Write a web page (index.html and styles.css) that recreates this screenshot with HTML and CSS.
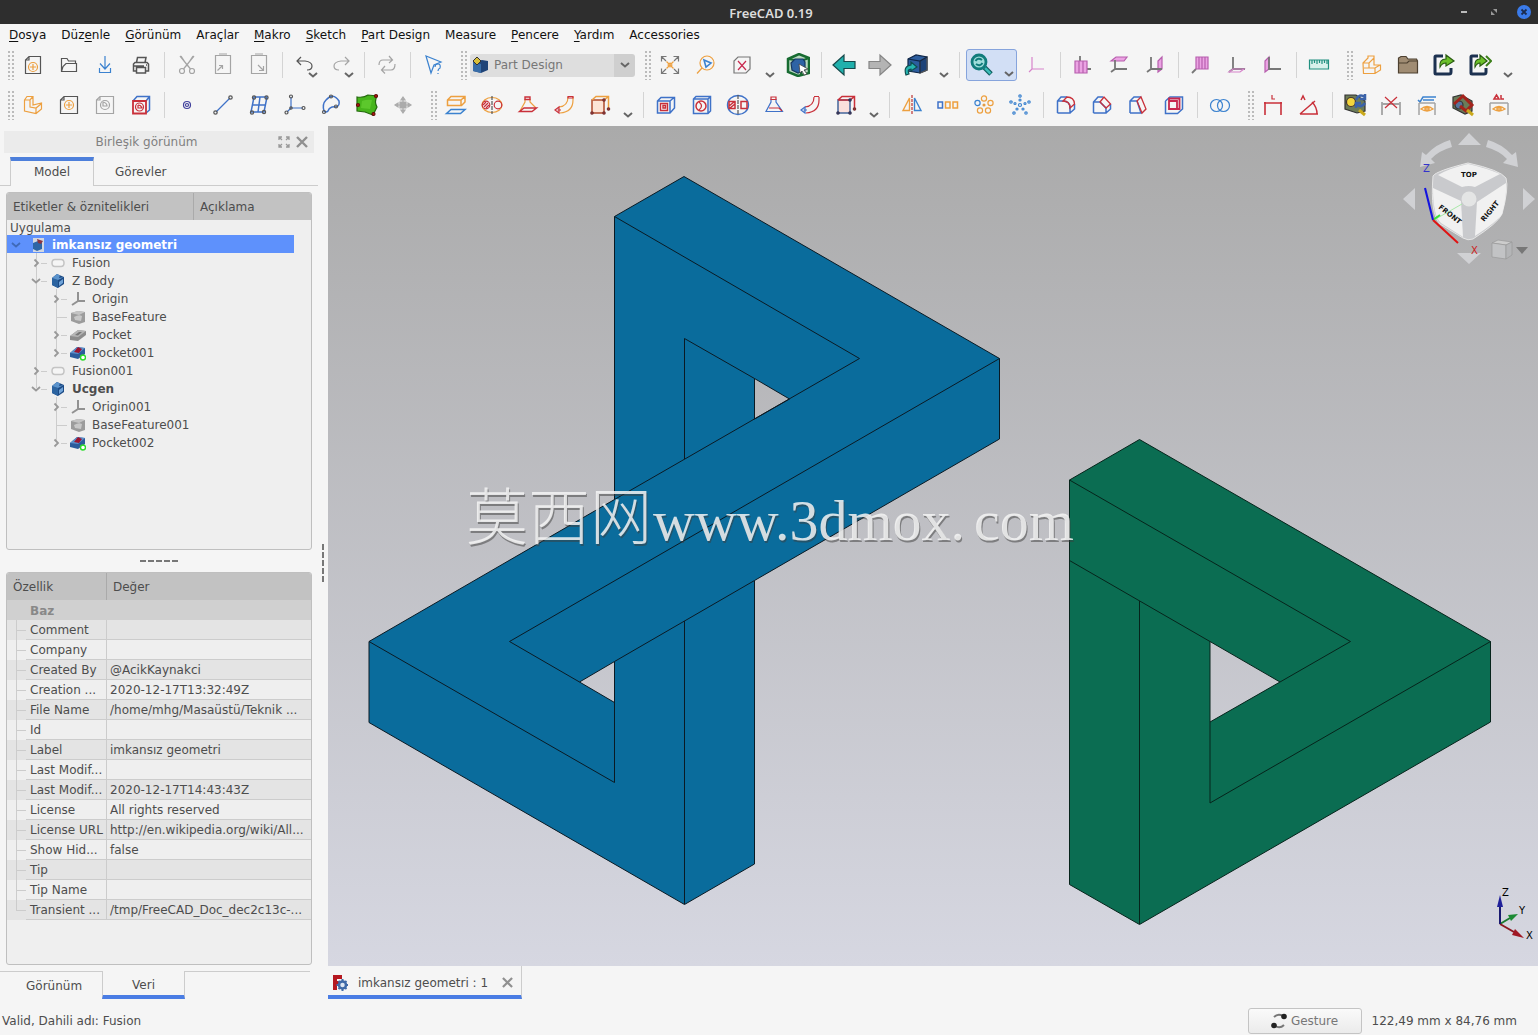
FILE: index.html
```html
<!DOCTYPE html>
<html lang="tr">
<head>
  <meta charset="UTF-8">
  <meta name="viewport" content="width=device-width, initial-scale=1.0">
  <title>FreeCAD 0.19</title>
  <link rel="stylesheet" href="styles.css">
</head>
<body>

  <!-- Icons used more than once -->
  <svg class="defs" aria-hidden="true">
    <symbol id="chev" viewBox="0 0 10 6"><path d="M1 1L5 4.500L9 1" fill="none" stroke="currentColor" stroke-width="2"/></symbol>
    <symbol id="expand" viewBox="0 0 10 10"><path d="M3.500 1.500L7 5L3.500 8.500" fill="none" stroke="currentColor" stroke-width="1.800"/></symbol>
    <symbol id="collapse" viewBox="0 0 10 10"><path d="M1 3L5 6.500L9 3" fill="none" stroke="currentColor" stroke-width="1.800"/></symbol>
    <symbol id="close" viewBox="0 0 12 12"><path d="M1 1L11 11M11 1L1 11" fill="none" stroke="#909090" stroke-width="2.400"/></symbol>
    <symbol id="fusion" viewBox="0 0 16 16"><path d="M5 4.500H11Q14 4.500 14 8T11 11.500H5Q2 11.500 2 8T5 4.500Z" fill="#f5f5f5" stroke="#c4c4c4" stroke-width="1.500"/></symbol>
    <symbol id="bodyicon" viewBox="0 0 16 16"><path d="M2 5L7 1L14 4V11L8 15L2 12Z" fill="#1c4a84"/><path d="M2 5L8 7V15L2 12Z" fill="#2b63a0"/><path d="M2 5L7 1L10 2.500L9 5L14 4L8 7Z" fill="#5b93cc"/><path d="M9 9L13 6V10L9 13Z" fill="#6fa3d8"/></symbol>
    <symbol id="origin" viewBox="0 0 16 16"><path d="M8 1V10L2 14M8 10H15" fill="none" stroke="#929292" stroke-width="2"/></symbol>
    <symbol id="base" viewBox="0 0 16 16"><path d="M1 4L8 2L15 3V13L9 15L1 12Z" fill="#9c9c9c"/><path d="M1 4L8 2L15 3L9 6Z" fill="#c4c4c4"/><path d="M4 8Q9 5 12 7L11 12L5 11Z" fill="#c8c8c8"/></symbol>
    <symbol id="pocketgrey" viewBox="0 0 16 16"><path d="M0 9L8 3L16 4V8L8 14L0 13Z" fill="#8c8c8c"/><path d="M0 9L8 3L16 4L8 10Z" fill="#b5b5b5"/><path d="M5 8L9 5H12L8 8.500Z" fill="#777"/></symbol>
    <symbol id="pocket" viewBox="0 0 16 16"><path d="M0 8L7 2L15 3V9L8 14L0 12Z" fill="#2b5b9c"/><path d="M0 8L7 2L15 3L8 9Z" fill="#5c8fcb"/><path d="M4 7L8 2L12 4L9 8Z" fill="#9c1530"/><circle cx="13" cy="12.500" r="2.500" fill="#fff" stroke="#2bdc2b" stroke-width="1.400"/></symbol>
  </svg>

  <header class="titlebar">
    <h1>FreeCAD 0.19</h1>
    <div class="winbuttons">
      <button aria-label="Küçült"><svg viewBox="0 0 16 16"><path d="M5 8H11" stroke="#bbb" stroke-width="2"/></svg></button>
      <button aria-label="Geri yükle"><svg viewBox="0 0 16 16"><path d="M7 5H11V9ZM5 7V11H9Z" fill="#999"/></svg></button>
      <button aria-label="Kapat"><svg viewBox="0 0 16 16"><circle cx="8" cy="8" r="7" fill="#3a7bea"/><path d="M5.500 5.500L10.500 10.500M10.500 5.500L5.500 10.500" stroke="#1b2c50" stroke-width="1.800"/></svg></button>
    </div>
  </header>

  <nav class="menubar">
    <a href="#"><u>D</u>osya</a>
    <a href="#">Düz<u>e</u>nle</a>
    <a href="#"><u>G</u>örünüm</a>
    <a href="#">Araçlar</a>
    <a href="#"><u>M</u>akro</a>
    <a href="#"><u>S</u>ketch</a>
    <a href="#"><u>P</u>art Design</a>
    <a href="#">Measure</a>
    <a href="#"><u>P</u>encere</a>
    <a href="#"><u>Y</u>ardım</a>
    <a href="#">Accessories</a>
  </nav>

  <div class="toolrow">
    <div class="toolbar">
      <span class="handle"></span>
      <button class="tool" aria-label="Yeni"><svg viewBox="0 0 24 24"><path d="M8 3.500H19.500V20.500H4.500V7ZM8 3.500V7H4.500"/><g class="orange"><circle cx="12" cy="14" r="4.500"/><path d="M12 11V17M9 14H15"/></g></svg></button>
      <button class="tool" aria-label="Aç"><svg viewBox="0 0 24 24"><path d="M4.500 19V5.500H10L11.500 8H18.500V10.500M4.500 18.500H19.500V10.500H9L6 13.500L4.500 18.500"/></svg></button>
      <button class="tool" aria-label="Kaydet"><svg viewBox="0 0 24 24"><path class="azure" d="M6.500 15V19.500H17.500V15M12 3V16M7 10.500L12 16L17 10.500"/></svg></button>
      <button class="tool" aria-label="Yazdır"><svg viewBox="0 0 24 24"><path d="M7.500 9.500L8.500 4.500H17L16 9.500M4.500 18V11L6 9.500H18L19.500 11V18H16.500V14.500H7.500V18ZM7.500 18V20H16.500V18M4.500 13H15M17 12H18" stroke-width="1.500"/></svg></button>
      <span class="sep"></span>
      <button class="tool" aria-label="Kes"><svg class="grey" viewBox="0 0 24 24"><path d="M5 3L15.500 16M19 3L8.500 16M6 3L12.500 13M18 3L11.500 13"/><circle cx="7" cy="18" r="2.500"/><circle cx="17" cy="18" r="2.500"/></svg></button>
      <button class="tool" aria-label="Kopyala"><svg class="grey" viewBox="0 0 24 24"><path d="M4.500 2.500H19.500V20.500H4.500ZM8 1H16M6.500 17.500L11.500 12.500M8 12.500H11.500V16"/></svg></button>
      <button class="tool" aria-label="Yapıştır"><svg class="grey" viewBox="0 0 24 24"><path d="M4.500 2.500H19.500V20.500H4.500ZM8 1H16M11 12L16.500 17.500M16.500 13V17.500H12"/></svg></button>
      <span class="sep"></span>
      <button class="tool" aria-label="Geri al"><svg viewBox="0 0 24 24"><path d="M8 4L4 8L8 12M4 8H12Q19 9 19 13Q19 17 14 17"/></svg><svg class="corner"><use href="#chev"/></svg></button>
      <button class="tool" aria-label="Yinele"><svg class="grey" viewBox="0 0 24 24"><path d="M16 4L20 8L16 12M20 8H12Q5 9 5 13Q5 17 10 17"/></svg><svg class="corner"><use href="#chev"/></svg></button>
      <span class="sep"></span>
      <button class="tool" aria-label="Yenile"><svg class="grey" viewBox="0 0 24 24"><path d="M4 12Q4 7 8 7H17M14 3L17.500 7L14 10M20 11Q20 17 16 17H7M10 13L6.500 17L10 20.500"/></svg></button>
      <span class="sep"></span>
      <button class="tool" aria-label="Bu nedir?"><svg class="azure" viewBox="0 0 24 24"><path d="M5 3L10 20L13 12L20 9Z"/><path d="M14 14Q14 11 17 11T19 15Q17 16 17 18M17 20V21"/></svg></button>
    </div>
    <div class="toolbar">
      <span class="handle"></span>
      <div class="combo">
        <svg class="comboicon" viewBox="0 0 16 16"><path d="M1 5L10 3L16 4V13L9 16L1 14Z" fill="#1f4478"/><path d="M1 5L9 7V16L1 14Z" fill="#386da8"/><path d="M1 4L5 0L9 4L5 8Z" fill="#d9c03a" stroke="#333" stroke-width="1"/></svg>
        <select aria-label="Tezgah"><option>Part Design</option></select>
        <svg class="comboarrow"><use href="#chev"/></svg>
      </div>
    </div>
    <div class="toolbar">
      <span class="handle"></span>
      <button class="tool" aria-label="Tümünü sığdır"><svg viewBox="0 0 24 24"><path class="mid" d="M3.500 8.500V3.500H8.500M3.500 3.500L8 8M15.500 3.500H20.500V8.500M20.500 3.500L16 8M3.500 15.500V20.500H8.500M3.500 20.500L8 16M20.500 15.500V20.500H15.500M20.500 20.500L16 16"/><path class="orange" d="M8.500 8.500L15.500 15.500M15.500 8.500L8.500 15.500M12 10L14 12L12 14L10 12Z"/></svg></button>
      <button class="tool" aria-label="Seçimi sığdır"><svg viewBox="0 0 24 24"><g class="orange"><circle cx="13" cy="10" r="7"/><path d="M8 15L3 20.500"/></g><path class="azure" d="M10 7L17 10L12 14Z" stroke-width="1.600"/></svg></button>
      <button class="tool" aria-label="Çizim stili"><svg viewBox="0 0 24 24"><path class="mid" d="M8 4H20V16L16 20H4V8Z"/><path class="crimson" d="M8 8L16 17M16 8L8 17"/></svg></button>
      <button class="more" aria-label="Çizim stili seçenekleri"><svg><use href="#chev"/></svg></button>
      <button class="tool" aria-label="Sınırlayıcı kutu"><svg viewBox="0 0 24 24"><path d="M2 6L13 1L23 5V20L12 23L2 19Z" fill="#b9d8c0" stroke="#176b31" stroke-width="2.500"/><path d="M2 6L15 8L23 5M15 8V22" stroke="#176b31" stroke-width="2"/><path d="M5 10L9 6H17L19 9V17L12 20L6 17Z" fill="#2e63a5" stroke="#173861"/><path d="M13 11L22 16L18 17L21 21L18 22L16 18L14 20Z" fill="#fff" stroke="#444" stroke-width=".8"/></svg></button>
      <span class="sep"></span>
      <button class="tool" aria-label="Geri"><svg viewBox="0 0 24 24"><path d="M1 12L12 2V8.500H23V15.500H12V22Z" fill="#20b0ac" stroke="#17484a"/></svg></button>
      <button class="tool" aria-label="İleri"><svg viewBox="0 0 24 24"><path d="M23 12L12 2V8.500H1V15.500H12V22Z" fill="#b4b4b4" stroke="#858585"/></svg></button>
      <button class="tool" aria-label="Bağlantıya git"><svg viewBox="0 0 24 24"><path d="M4 6L12 2L23 4V17L16 20L4 18Z" fill="#2c5d9e" stroke="#0e2547"/><path d="M16 8L23 4V17L16 20Z" fill="#1c4278"/><path d="M4 6L16 8L23 4M16 8V20" stroke="#0e2547"/><path d="M2 22Q-1 13 7 12V9L13 14L7 18V16Q3 16 5 21Z" fill="#25b5b0" stroke="#0f4e50"/></svg></button>
      <button class="more" aria-label="Bağlantı seçenekleri"><svg><use href="#chev"/></svg></button>
      <span class="sep"></span>
      <button class="tool active" aria-label="Görünümü eşitle"><svg viewBox="0 0 24 24"><path d="M14.500 14.500L21 21" stroke="#0d5e5e" stroke-width="5"/><path d="M15 15L20.500 20.500" stroke="#3bbcb8" stroke-width="2.500"/><circle cx="9" cy="9" r="7" fill="#9fdedb" stroke="#117c7c" stroke-width="2.800"/><path d="M5.500 8Q8 4 12 7M12.500 10Q10 14 6 11" stroke="#117c7c" stroke-width="2"/></svg><svg class="corner"><use href="#chev"/></svg></button>
      <button class="tool" aria-label="Eşölçümlü"><svg class="pink" viewBox="0 0 24 24"><path d="M7 4V16H19M7 16L4 19"/></svg></button>
      <span class="sep"></span>
      <button class="tool" aria-label="Ön"><svg viewBox="0 0 24 24"><path class="mid" d="M9 3V16H20" stroke-width="1.800"/><path class="pinkfill" d="M4 8H16V20H4ZM8 8V20M12 8V20"/></svg></button>
      <button class="tool" aria-label="Üst"><svg viewBox="0 0 24 24"><path class="pinkfill" d="M4 8L9 4H20L17 8Z"/><path class="mid" d="M8 7V16H20M8 16L4 19" stroke-width="1.800"/></svg></button>
      <button class="tool" aria-label="Sağ"><svg viewBox="0 0 24 24"><path class="pinkfill" d="M15 8L19 4V16L15 19Z"/><path class="mid" d="M8 4V16H19M8 16L4 19" stroke-width="1.800"/></svg></button>
      <span class="sep"></span>
      <button class="tool" aria-label="Arka"><svg viewBox="0 0 24 24"><path class="mid" d="M7 16L3 20" stroke-width="1.800"/><path class="pinkfill" d="M7 4H19V16H7ZM10 4V16M13 4V16M16 4V16"/></svg></button>
      <button class="tool" aria-label="Alt"><svg viewBox="0 0 24 24"><path class="mid" d="M8 4V16H20M8 16L4 19" stroke-width="1.800"/><path class="pink" d="M4 19L8 16H19L15 19Z"/></svg></button>
      <button class="tool" aria-label="Sol"><svg viewBox="0 0 24 24"><path class="pinkfill" d="M4 8L8 4V16L4 19Z"/><path class="mid" d="M8 4V16H20" stroke-width="1.800"/></svg></button>
      <span class="sep"></span>
      <button class="tool" aria-label="Mesafe ölç"><svg viewBox="0 0 24 24"><path d="M2.500 7H21.500V16H2.500ZM5 7V11M7.500 7V10M10 7V11M12.500 7V10M15 7V11M17.500 7V10M20 7V11" fill="#d8f1ec" stroke="#219080"/></svg></button>
    </div>
    <div class="toolbar">
      <span class="handle"></span>
      <button class="tool" aria-label="Parça oluştur"><svg class="orange" viewBox="0 0 24 24"><path d="M3 10L8 5V3H14V12H20.500V17L15 20.500H3.500ZM3 10H9L14 5M9 10V15H15L20 12M15 15V20M4 15H9"/></svg></button>
      <button class="tool" aria-label="Grup oluştur"><svg viewBox="0 0 24 24"><path d="M2.500 20V5L5 3.500H10L12 6H20.500L21.500 8V20Z" fill="#a08c73" stroke="#4d4030"/><path d="M3 10H11L13 8H21" stroke="#4d4030"/></svg></button>
      <button class="tool" aria-label="Bağlantı oluştur"><svg viewBox="0 0 24 24"><path d="M11 3H4Q3 3 3 4V20Q3 21 4 21H17Q19 21 19 19V15" stroke="#1c3150" stroke-width="3"/><path d="M8 14Q7 6 14 6V2L22 8L14 13V10Q10 10 8 14Z" fill="#6cc02b" stroke="#2a5c12"/></svg></button>
      <button class="tool" aria-label="Bağlantı grubu"><svg viewBox="0 0 24 24"><path d="M10 3H4Q3 3 3 4V20Q3 21 4 21H16Q18 21 18 19V15" stroke="#1c3150" stroke-width="3"/><path d="M7 14Q6 6 12 6V2L19 8L12 13V10Q9 10 7 14Z" fill="#6cc02b" stroke="#2a5c12"/><path d="M18 3L23 8L18 13" stroke="#3c7f1a" stroke-width="2"/></svg></button>
      <button class="more" aria-label="Bağlantı eylemleri"><svg><use href="#chev"/></svg></button>
    </div>
  </div>

  <div class="toolrow">
    <div class="toolbar">
      <span class="handle"></span>
      <button class="tool" aria-label="Gövde oluştur"><svg class="orange" viewBox="0 0 24 24"><path d="M3.500 7L6 3.500H12V12L20.500 10V16L15 20.500L3.500 18ZM3.500 7H9L12 3.500M9 7V14L15 15L20 11M15 15V20"/></svg></button>
      <button class="tool" aria-label="Eskiz oluştur"><svg viewBox="0 0 24 24"><path d="M7 3.500H20.500V20.500H3.500V7ZM7 3.500V7H3.500"/><g class="orange"><circle cx="12" cy="12" r="4.500"/><path d="M12 9V15M9 12H15"/></g></svg></button>
      <button class="tool" aria-label="Eskizi düzenle"><svg class="grey" viewBox="0 0 24 24"><path d="M7 3.500H20.500V20.500H3.500V7ZM7 3.500V7H3.500"/><circle cx="12" cy="12" r="4.500"/><path d="M10 9V13H14Q14 10 10 9"/></svg></button>
      <button class="tool" aria-label="Eskizi eşle"><svg viewBox="0 0 24 24"><path class="blue" d="M4 8L8 3.500H20.500V17L17 20M17 8L20.500 3.500" stroke-width="1.500"/><path class="red" d="M4 8H17V20.500H4Z" stroke-width="1.800"/><circle class="red" cx="10.500" cy="14" r="4"/><path class="red" d="M9 12V15H13Q12 12 9 12"/></svg></button>
      <span class="sep"></span>
      <button class="tool" aria-label="Nokta"><svg viewBox="0 0 24 24" class="navy"><circle cx="12" cy="12" r="3.500"/><circle cx="12" cy="12" r="1.500"/></svg></button>
      <button class="tool" aria-label="Çizgi"><svg viewBox="0 0 24 24"><path class="blue" d="M5 19L19 5"/><circle cx="4.500" cy="19.500" r="1.700"/><circle cx="19.500" cy="4.500" r="1.700"/></svg></button>
      <button class="tool" aria-label="Düzlem"><svg viewBox="0 0 24 24"><path class="blue" d="M7 4H20L17 19H4ZM13 4L11 19M5 12H19" stroke-width="1.500"/><circle cx="7" cy="4.500" r="1.600"/><circle cx="19.500" cy="4.500" r="1.600"/><circle cx="5" cy="19.500" r="1.600"/><circle cx="17" cy="19" r="1.600"/></svg></button>
      <button class="tool" aria-label="Koordinat sistemi"><svg viewBox="0 0 24 24"><path class="blue" d="M8 4V15H20M8 15L4 19"/><circle cx="8" cy="3.500" r="1.500"/><circle cx="20.500" cy="15" r="1.500"/><circle cx="3.500" cy="19.500" r="1.500"/><circle cx="8" cy="15" r="1.200"/></svg></button>
      <button class="tool" aria-label="Şekil bağlayıcı"><svg viewBox="0 0 24 24"><path class="blue" d="M5 18Q3 11 7 7Q14 -1 20 8Q21 13 17 14Q11 13 9 18Q7 20 5 18Z" stroke-width="1.500"/><circle cx="12" cy="3.500" r="1.500"/><circle cx="5" cy="19" r="1.500"/><circle cx="17" cy="13.500" r="1.500"/></svg></button>
      <button class="tool" aria-label="Alt şekil bağlayıcı"><svg viewBox="0 0 24 24"><path d="M2 4Q9 5 13 2L22 3Q19 9 22 14L18 22L10 19L2 18Z" fill="#47b51c" stroke="#23690d"/><path d="M7 8Q12 6 17 7L15 16L6 15Z" fill="#5cc82c" stroke="none"/><g fill="#b51a12" stroke="#5e0f08"><circle cx="3" cy="12" r="1.500"/><circle cx="21" cy="3" r="1.500"/><circle cx="18.500" cy="21" r="1.500"/></g></svg></button>
      <button class="tool" aria-label="Klon"><svg viewBox="0 0 24 24"><path d="M9 9H15V15H9ZM12 4L14 7H10ZM12 20L14 17H10ZM4 12L7 10V14ZM20 12L17 10V14ZM7 12H17M12 7V17" fill="#aaa" stroke="#acacac"/></svg></button>
    </div>
    <div class="toolbar">
      <span class="handle"></span>
      <button class="tool" aria-label="Doldur"><svg viewBox="0 0 24 24"><path class="orange" d="M3.500 7L7 3.500H21V9L17.500 12.500H3.500ZM3.500 7H17L21 3.500M17 7V12" stroke-width="1.500"/><path class="azure" d="M2.500 20.500L7 16.500H21L16.500 20.500Z" stroke-width="1.500"/></svg></button>
      <button class="tool" aria-label="Döndür"><svg viewBox="0 0 24 24"><ellipse class="orange" cx="12" cy="12" rx="10" ry="7.500"/><g class="red"><circle cx="6" cy="12" r="3.800"/><circle cx="18" cy="12" r="3.800"/><path d="M4 14L8 10M3 12L6 9M6 15L9 12" /></g><path d="M12 3V21" stroke-dasharray="4 1"/></svg></button>
      <button class="tool" aria-label="Ek loft"><svg viewBox="0 0 24 24"><path class="orange" d="M9 6V9L4 18M14 6V9L20 15"/><path class="red" d="M9 4H14V6.500H9ZM3.500 18.500L8 15H20.500L16 18.500Z" stroke-width="1.400"/></svg></button>
      <button class="tool" aria-label="Ek süpürme"><svg viewBox="0 0 24 24"><path class="orange" d="M21 4V7Q21 19 8 20M16 4Q16 13 7 14"/><path class="red" d="M16 3.500H21V5H16ZM3 17L7 14V20ZM5.500 17H9"/></svg></button>
      <button class="tool" aria-label="Ek ilkel"><svg viewBox="0 0 24 24"><path d="M4 7H16V20H4Z" fill="#fde4d6" stroke="#b04b2e" stroke-width="1.500"/><path class="orange" d="M4 7L8 3.500H20.500V16M16 7L20 4" stroke-width="1.500"/><g fill="#a33" stroke="#733"><circle cx="4" cy="20" r="1.200"/><circle cx="16" cy="20" r="1.200"/><circle cx="20.500" cy="16" r="1.200"/><circle cx="16" cy="7" r="1.200"/></g></svg></button>
      <button class="more" aria-label="Ek ilkeller"><svg><use href="#chev"/></svg></button>
      <span class="sep"></span>
      <button class="tool" aria-label="Cep"><svg viewBox="0 0 24 24"><path class="blue" d="M3.500 8L7 4.500H20.500V15L16 20H3.500ZM3.500 8H16V20M16 8L20 4.500" stroke-width="1.500"/><path class="red" d="M6.500 10.500H13.500V17.500H6.500ZM9 12.500V15H11.500V12.500Z" stroke-width="1.400"/></svg></button>
      <button class="tool" aria-label="Delik"><svg viewBox="0 0 24 24"><path class="blue" d="M3.500 6L6 3.500H20.500V18L18 20.500H3.500ZM3.500 6H18V20.500M18 6L20 4" stroke-width="1.500"/><circle class="red" cx="11" cy="13" r="5" stroke-width="1.500"/><path class="red" d="M9 9Q14 13 9 17"/></svg></button>
      <button class="tool" aria-label="Oluk"><svg viewBox="0 0 24 24"><ellipse class="blue" cx="12" cy="12" rx="10.500" ry="9.500" stroke-width="1.400"/><path d="M12 2V22" stroke-dasharray="4 1"/><path class="red" d="M3 8.500H9V15.500H3ZM15 8.500H21V15.500H15ZM3 13L8 9M4 15L9 11" stroke-width="1.500"/></svg></button>
      <button class="tool" aria-label="Çıkarma loft"><svg viewBox="0 0 24 24"><path class="blue" d="M9 6V9L4 18.500H20.500L14 9V6"/><path class="red" d="M9 4H14V6.500H9ZM7 15H17L20 18"/></svg></button>
      <button class="tool" aria-label="Çıkarma süpürme"><svg viewBox="0 0 24 24"><path class="red" d="M21 4V7Q21 19 8 20M16 4Q16 13 7 14M16 3.500H21"/><path class="blue" d="M3 17L7 14V20ZM5.500 17H9"/></svg></button>
      <button class="tool" aria-label="Çıkarma ilkel"><svg viewBox="0 0 24 24"><path d="M4 7H16V20H4Z" fill="#fbe0dc" stroke="#44669b" stroke-width="1.500"/><path class="red" d="M4 7L8 3.500H20.500V16M4 7H16L20 4" stroke-width="1.500"/><g fill="#446" stroke="#335"><circle cx="4" cy="20" r="1.200"/><circle cx="16" cy="20" r="1.200"/><circle cx="16" cy="7" r="1.200"/></g><circle cx="20.500" cy="16" r="1.200" fill="#a33" stroke="#733"/></svg></button>
      <button class="more" aria-label="Çıkarma ilkelleri"><svg><use href="#chev"/></svg></button>
      <span class="sep"></span>
      <button class="tool" aria-label="Aynala"><svg viewBox="0 0 24 24"><path class="orange" d="M9.500 5V17.500H3Z" stroke-width="1.400"/><path d="M12 2V21" stroke="#b33" stroke-dasharray="3 1"/><path class="azure" d="M14.500 5V17.500H21Z" stroke-width="1.400"/></svg></button>
      <button class="tool" aria-label="Doğrusal desen"><svg viewBox="0 0 24 24"><path class="blue" d="M2 9H6.500V15H2Z" stroke-width="1.500"/><path class="orange" d="M9.500 9H14V15H9.500ZM17 9H21.500V15H17Z" stroke-width="1.500"/></svg></button>
      <button class="tool" aria-label="Kutupsal desen"><svg class="orange" viewBox="0 0 24 24"><circle cx="12" cy="5.500" r="2.600"/><circle class="azure" cx="5.500" cy="10" r="2.600"/><circle cx="18.500" cy="10" r="2.600"/><circle cx="8" cy="17.500" r="2.600"/><circle cx="16" cy="17.500" r="2.600"/><circle cx="12" cy="12" r="1" fill="#555"/></svg></button>
      <button class="tool" aria-label="Çoklu dönüşüm"><svg class="azure" viewBox="0 0 24 24"><circle cx="12" cy="12" r="1.500"/><circle cx="12" cy="3" r="1.200"/><circle cx="12" cy="7" r="1"/><circle cx="3" cy="9" r="1.200"/><circle cx="7" cy="10.500" r="1"/><circle cx="21" cy="9" r="1.200"/><circle cx="17" cy="10.500" r="1"/><circle cx="6" cy="20" r="1.200"/><circle cx="9" cy="16" r="1"/><circle cx="18" cy="20" r="1.200"/><circle cx="15" cy="16" r="1"/></svg></button>
      <span class="sep"></span>
      <button class="tool" aria-label="Yuvarla"><svg viewBox="0 0 24 24"><path class="blue" d="M3.500 20V8L7 4H13M3.500 8H9Q16 8 16 15V20H3.500M16 20L20.500 16V11" stroke-width="1.500"/><path class="red" d="M9 8Q16 8 16 15L20.500 11Q20 4 13 4Z" stroke-width="1.300"/></svg></button>
      <button class="tool" aria-label="Pah"><svg viewBox="0 0 24 24"><path class="blue" d="M3.500 20V9L8 4H13M3.500 9H10L16 15V20H3.500M16 20L20.500 16V11" stroke-width="1.500"/><path class="red" d="M10 9L14 4L20.500 11L16 15Z" stroke-width="1.300"/></svg></button>
      <button class="tool" aria-label="Eğim"><svg viewBox="0 0 24 24"><path class="blue" d="M4 20V8L8 4H15M4 8H11L15 20H4" stroke-width="1.500"/><path class="red" d="M11 8L15 4L20 16L16 20Z" stroke-width="1.300"/></svg></button>
      <button class="tool" aria-label="Kalınlık"><svg viewBox="0 0 24 24"><path class="blue" d="M3.500 8V20.500H15.500L20.500 16V4H8L3.500 8" stroke-width="1.500"/><path class="crimson" d="M7 5.500H17.500V16H7ZM7 8H15V16" stroke-width="1.800"/></svg></button>
      <span class="sep"></span>
      <button class="tool" aria-label="Mantıksal işlem"><svg class="azure" viewBox="0 0 24 24"><circle cx="8.500" cy="12.500" r="6"/><circle cx="15.500" cy="12.500" r="6"/></svg></button>
    </div>
    <div class="toolbar">
      <span class="handle"></span>
      <button class="tool" aria-label="Doğrusal ölç"><svg class="red" viewBox="0 0 24 24"><path d="M4 9V22M20 9V22M3 10H21" stroke-width="1.600"/><path d="M11 2V6H14"/></svg></button>
      <button class="tool" aria-label="Açısal ölç"><svg class="red" viewBox="0 0 24 24"><path d="M3 21H21M3 21L18 8M15 9Q20 14 20 21M4 7L6 3L8 7" stroke-width="1.500"/></svg></button>
      <span class="sep"></span>
      <button class="tool" aria-label="Ölçümü yenile"><svg viewBox="0 0 24 24"><path d="M2 2H13L22 8V18L14 20L2 16Z" fill="#6b7b58" stroke="#333"/><circle cx="8" cy="9" r="4.500" fill="#f3d63b" stroke="#433"/><path d="M13 7Q16 0 22 4M22 1V6H17M22 10Q19 15 14 12M13 15V10H18" stroke="#3a62a8" stroke-width="2.500"/><path d="M16 17L22 22" stroke="#caa91c" stroke-width="3"/></svg></button>
      <button class="tool" aria-label="Tümünü temizle"><svg viewBox="0 0 24 24"><path class="grey" d="M3 9V22M21 9V22M3 11H21" stroke-width="1.800"/><path class="red" d="M6 4L18 15M18 4L6 15"/></svg></button>
      <button class="tool" aria-label="Tümünü göster"><svg viewBox="0 0 24 24"><path class="azure" d="M3 7L5 9L8 4H21M8 7H19" stroke-width="1.500"/><path class="grey" d="M4 10V22M20 10V22M4 10H20" stroke-width="1.500"/><path class="orange" d="M6 16Q12 11 18 16Q12 20 6 16ZM10 15H14V17H10Z" stroke-width="1.400"/></svg></button>
      <button class="tool" aria-label="3B göster"><svg viewBox="0 0 24 24"><path d="M2 4L10 2L21 8V18L14 21L2 15Z" fill="#6b7b58" stroke="#333"/><circle cx="8" cy="12" r="4" fill="#58749c" stroke="#333"/><path d="M3 11L12 3L21 12L15 18L9 13" stroke="#a3231c" stroke-width="3"/><path d="M16 17L22 22" stroke="#caa91c" stroke-width="3"/></svg></button>
      <button class="tool" aria-label="Delta göster"><svg viewBox="0 0 24 24"><path class="red" d="M7 6L9.500 2L12 6ZM14 2V6H17" stroke-width="1.500"/><path class="grey" d="M3 10V22M21 10V22M3 10H21" stroke-width="1.500"/><path class="orange" d="M6 16Q12 11 18 16Q12 20 6 16ZM10 15H14V17H10Z" stroke-width="1.400"/></svg></button>
    </div>
  </div>

  <main>
    <aside class="dock">
      <div class="docktitle">
        <h2>Birleşik görünüm</h2>
        <button aria-label="Ayır"><svg viewBox="0 0 12 12"><path d="M1 4V1H4M1 1L4 4M8 1H11V4M11 1L8 4M1 8V11H4M1 11L4 8M11 8V11H8M11 11L8 8" fill="none" stroke="#999" stroke-width="1.300"/></svg></button>
        <button aria-label="Kapat"><svg><use href="#close"/></svg></button>
      </div>

      <div class="tabs">
        <button class="tab on">Model</button>
        <button class="tab">Görevler</button>
      </div>

      <section class="panel treepanel">
        <div class="treehead"><span>Etiketler &amp; öznitelikleri</span><span>Açıklama</span></div>
        <p class="rootlabel">Uygulama</p>
        <ul class="tree">
          <li>
            <div class="row selected"><button class="exp" aria-label="Daralt"><svg><use href="#collapse"/></svg></button><svg class="ico" viewBox="0 0 16 16"><path d="M3 1H14V15H3Z" fill="#d4d8e0"/><path d="M3 6L8 4L12 6V12L7 14L3 12Z" fill="#2d65a5"/><path d="M7 2L13 4L11 7L8 6Z" fill="#8c3440"/></svg>imkansız geometri</div>
            <ul>
              <li><div class="row"><button class="exp" aria-label="Genişlet"><svg><use href="#expand"/></svg></button><svg class="ico"><use href="#fusion"/></svg>Fusion</div></li>
              <li>
                <div class="row"><button class="exp" aria-label="Daralt"><svg><use href="#collapse"/></svg></button><svg class="ico"><use href="#bodyicon"/></svg>Z Body</div>
                <ul>
                  <li><div class="row"><button class="exp" aria-label="Genişlet"><svg><use href="#expand"/></svg></button><svg class="ico"><use href="#origin"/></svg>Origin</div></li>
                  <li><div class="row"><span class="exp leaf"></span><svg class="ico"><use href="#base"/></svg>BaseFeature</div></li>
                  <li><div class="row"><button class="exp" aria-label="Genişlet"><svg><use href="#expand"/></svg></button><svg class="ico"><use href="#pocketgrey"/></svg>Pocket</div></li>
                  <li><div class="row"><button class="exp" aria-label="Genişlet"><svg><use href="#expand"/></svg></button><svg class="ico"><use href="#pocket"/></svg>Pocket001</div></li>
                </ul>
              </li>
              <li><div class="row"><button class="exp" aria-label="Genişlet"><svg><use href="#expand"/></svg></button><svg class="ico"><use href="#fusion"/></svg>Fusion001</div></li>
              <li>
                <div class="row bold"><button class="exp" aria-label="Daralt"><svg><use href="#collapse"/></svg></button><svg class="ico"><use href="#bodyicon"/></svg>Ucgen</div>
                <ul>
                  <li><div class="row"><button class="exp" aria-label="Genişlet"><svg><use href="#expand"/></svg></button><svg class="ico"><use href="#origin"/></svg>Origin001</div></li>
                  <li><div class="row"><span class="exp leaf"></span><svg class="ico"><use href="#base"/></svg>BaseFeature001</div></li>
                  <li><div class="row"><button class="exp" aria-label="Genişlet"><svg><use href="#expand"/></svg></button><svg class="ico"><use href="#pocket"/></svg>Pocket002</div></li>
                </ul>
              </li>
            </ul>
          </li>
        </ul>
      </section>

      <div class="hsplit"><i></i><i></i><i></i><i></i><i></i></div>

      <section class="panel proppanel">
        <table class="props">
          <thead><tr><th>Özellik</th><th>Değer</th></tr></thead>
          <tbody>
            <tr class="group"><td colspan="2">Baz</td></tr>
            <tr><td><span>Comment</span></td><td></td></tr>
            <tr><td><span>Company</span></td><td></td></tr>
            <tr><td><span>Created By</span></td><td>@AcikKaynakci</td></tr>
            <tr><td><span>Creation ...</span></td><td>2020-12-17T13:32:49Z</td></tr>
            <tr><td><span>File Name</span></td><td>/home/mhg/Masaüstü/Teknik ...</td></tr>
            <tr><td><span>Id</span></td><td></td></tr>
            <tr><td><span>Label</span></td><td>imkansız geometri</td></tr>
            <tr><td><span>Last Modif...</span></td><td></td></tr>
            <tr><td><span>Last Modif...</span></td><td>2020-12-17T14:43:43Z</td></tr>
            <tr><td><span>License</span></td><td>All rights reserved</td></tr>
            <tr><td><span>License URL</span></td><td>http://en.wikipedia.org/wiki/All...</td></tr>
            <tr><td><span>Show Hid...</span></td><td>false</td></tr>
            <tr><td><span>Tip</span></td><td></td></tr>
            <tr><td><span>Tip Name</span></td><td></td></tr>
            <tr><td><span>Transient ...</span></td><td>/tmp/FreeCAD_Doc_dec2c13c-...</td></tr>
          </tbody>
        </table>
      </section>

      <div class="tabs bottom">
        <button class="tab">Görünüm</button>
        <button class="tab on">Veri</button>
      </div>
    </aside>

    <div class="vsplit"><i></i><i></i><i></i><i></i><i></i></div>

    <div class="work">
      <div class="viewport">
        <svg class="scene" viewBox="328 126 1210 840">
          <!-- Z body -->
          <g stroke="#0a1a24" stroke-linejoin="round">
            <path fill="#0a6c9c" fill-rule="evenodd" d="M684 176.500L999.500 358.500V439L754.500 580.500V864L684.500 904.500L369 722.500V641.500L614.500 499.500V216.500ZM754.500 378.500V419L789.500 399ZM614.500 661.500L579.500 682L614.500 702.500Z"/>
            <path fill="none" d="M614.500 216.500L859.500 358.500L614.500 499.500M684.500 459V338.500L754.500 378.500M999.500 358.500L509.500 641.500L579.500 682M614.500 661.500L754.500 580.500M369 641.500L614.500 782.500V702M684.500 621V904"/>
          </g>
          <!-- triangle body -->
          <g stroke="#06241b" stroke-linejoin="round">
            <path fill="#0b6d52" fill-rule="evenodd" d="M1139.500 439.500L1490.500 641.500V722L1139.500 924.500L1069.500 884.500V480ZM1210 641.500V722L1280 682Z"/>
            <path fill="none" d="M1069.500 480L1350.500 641.500L1280 682M1210 722V803L1490.500 641.500M1069.500 560.500L1210 641.500M1139.500 601V924"/>
          </g>
          <g class="watermark">
            <text class="wm-cjk" x="466" y="540">莫西网</text>
            <text class="wm-latin" x="653" y="540">www.3dmox.</text>
            <text class="wm-latin" x="974" y="540">com</text>
          </g>
        </svg>

        <svg class="navcube" viewBox="0 0 158 150">
          <g fill="#d0d1d4">
            <path d="M89 7L101 19H78ZM35 62V84L23 73ZM143 62V84L155 73ZM77 127H101L89 138Z"/>
            <path d="M70 14L72 21Q58 25 51 33L55 37L40 41L42 26L46 29Q56 18 70 14ZM108 14L106 21Q120 25 127 33L123 37L138 41L136 26L132 29Q122 18 108 14Z"/>
            <path d="M53 50Q56 45 88 37Q120 44 126 52Q129 62 122 88Q118 97 93 113Q88 115 83 112L60 98Q50 88 53 50Z" fill="#c9cacd" stroke="#e6e6e6"/>
          </g>
          <g fill="#f1f1f1">
            <path d="M58 49Q70 42 88 38Q106 42 120 48L95 61Q89 59 82 61Z"/>
            <path d="M53 62L81 75L83 111L61 97Q53 90 53 62Z"/>
            <path d="M97 76L126 57Q127 70 122 88Q118 95 95 110Z"/>
            <circle cx="89" cy="73" r="7.500" fill="#e4e5e5"/>
          </g>
          <text class="face" x="81" y="51">TOP</text>
          <text class="face" transform="translate(58 82) rotate(38)">FRONT</text>
          <text class="face" transform="translate(104 96) rotate(-50)">RIGHT</text>
          <path d="M54 94L82 78" stroke="#a9e8a9"/>
          <path d="M53 94L60 89" stroke="#39e339" stroke-width="2"/>
          <path d="M45 62L53 94" stroke="#1212e0" stroke-width="2"/>
          <path d="M53 94L78 117" stroke="#e01212" stroke-width="2"/>
          <text class="axis" x="43" y="46" fill="#3333cc">Z</text>
          <text class="axis" x="91" y="128" fill="#cc2222">X</text>
          <g stroke="#999" stroke-width=".7"><path d="M112 117L118 114L132 116L126 119Z" fill="#ccc"/><path d="M112 117L126 119V133L112 131Z" fill="#c2c3c5"/><path d="M126 119L132 116V129L126 133Z" fill="#b4b5b7"/></g>
          <path d="M136 121H148L142 128Z" fill="#777"/>
        </svg>

        <svg class="axiscross" viewBox="0 0 46 60">
          <path d="M8 38L18 32" stroke="#1c7a30" stroke-width="2"/><path d="M16 29L26 28L19 35Z" fill="#1c8a34"/>
          <path d="M8 38L22 46" stroke="#8c1822" stroke-width="2"/><path d="M23 43L32 52L20 49Z" fill="#a01824"/>
          <path d="M8 38V20" stroke="#1a1a70" stroke-width="2"/><path d="M8 9L11 21H5Z" fill="#20209a"/>
          <text class="axis" x="10" y="10">Z</text>
          <text class="axis" x="27" y="28">Y</text>
          <text class="axis" x="34" y="53">X</text>
        </svg>
      </div>

      <div class="doctabs">
        <div class="doctab">
          <svg class="ico" viewBox="0 0 16 16"><path d="M1 0H10V4H5V6H9V10H5V15H1Z" fill="#b51820"/><circle cx="10.500" cy="10" r="3.500" fill="#dde6f2" stroke="#3f6aa8" stroke-width="2.500"/><path d="M10.500 4V6M10.500 14V16M4.500 10H6.500M14.500 10H16M6.500 6L8 7.500M14.500 6L13 7.500M6.500 14L8 12.500M14.500 14L13 12.500" stroke="#3f6aa8" stroke-width="2"/></svg>
          <a href="#">imkansız geometri : 1</a>
          <button aria-label="Sekmeyi kapat"><svg><use href="#close"/></svg></button>
        </div>
      </div>
    </div>
  </main>

  <footer class="statusbar">
    <span class="message">Valid, Dahili adı: Fusion</span>
    <button class="gesture"><svg viewBox="0 0 16 16"><path d="M3 4Q7 0 12 3M13 12Q9 16 4 13" fill="none" stroke="#777" stroke-width="2"/><circle cx="13" cy="3.500" r="2.800" fill="#222"/><circle cx="3" cy="12.500" r="2.800" fill="#222"/></svg>Gesture</button>
    <span>122,49 mm x 84,76 mm</span>
  </footer>

</body>
</html>
```
FILE: styles.css
```css
* {
  box-sizing: border-box;
}

body {
  margin: 0;
  height: 100vh;
  display: flex;
  flex-direction: column;
  overflow: hidden;
  background: #f5f5f5;
  color: #4d4d4d;
  font-family: "DejaVu Sans", sans-serif;
  font-size: 12px;
  line-height: 18px;
}

button, select {
  font: inherit;
  color: inherit;
  margin: 0;
  padding: 0;
  border: 0;
  background: none;
}

a {
  color: inherit;
  text-decoration: none;
}

ul {
  list-style: none;
  margin: 0;
  padding: 0;
}

h1, h2, p {
  margin: 0;
  font-size: inherit;
  font-weight: normal;
}

svg {
  display: block;
}

.defs {
  position: absolute;
  width: 0;
  height: 0;
}

/* title bar */
.titlebar {
  height: 24px;
  flex: none;
  display: grid;
  grid-template-columns: 1fr auto 1fr;
  align-items: center;
  background: #2e2e2e;
  color: #dcdcdc;
}

.titlebar h1 {
  grid-column: 2;
  padding: 2px 0 0 4px;
  font-family: "Noto Sans", sans-serif;
  font-size: 13px;
  font-weight: 600;
}

.winbuttons {
  display: flex;
  justify-content: flex-end;
  gap: 14px;
  padding-right: 6px;
}

.winbuttons svg {
  width: 16px;
  height: 16px;
}

/* menu */
.menubar {
  height: 21px;
  flex: none;
  display: flex;
  align-items: center;
  gap: 15px;
  padding-left: 9px;
  color: #111;
}

.menubar u {
  text-underline-offset: 2px;
}

/* toolbars */
.toolrow {
  height: 40px;
  flex: none;
  display: flex;
}

.toolbar {
  display: flex;
  align-items: center;
}

.handle {
  width: 8px;
  height: 30px;
  margin-left: 9px;
  background: radial-gradient(circle, #bbb 1px, transparent 1px) 0 0 / 4px 4px;
}

.toolbar:first-child .handle {
  margin-left: 7px;
}

.tool {
  position: relative;
  width: 36px;
  height: 32px;
  display: flex;
  align-items: center;
  justify-content: center;
}

.tool svg {
  width: 24px;
  height: 24px;
  fill: none;
  stroke: #555;
  stroke-width: 1.2;
}

.tool .corner {
  position: absolute;
  right: 5px;
  bottom: 3px;
  width: 10px;
  height: 6px;
  color: #666;
}

.tool.active {
  width: 51px;
  margin: 0 2px;
  padding-left: 3px;
  justify-content: flex-start;
  border: 1px solid #86a4dc;
  border-radius: 3px;
  background: #d2dff5;
}

.tool.active .corner {
  right: 2px;
}

.more {
  width: 20px;
  height: 32px;
  display: flex;
  align-items: flex-end;
  justify-content: center;
  padding-bottom: 3px;
  color: #666;
}

.more svg {
  width: 10px;
  height: 6px;
}

.sep {
  width: 1px;
  height: 26px;
  margin: 0 4px 0 5px;
  background: #d4d4d4;
}

.tool .orange, .tool .orange * { stroke: #eda040; }
.tool .azure { stroke: #3b82cf; }
.tool .orange .azure { stroke: #3b82cf; }
.tool .blue { stroke: #3f72c8; }
.tool .navy { stroke: #41419c; }
.tool .red { stroke: #c9303a; }
.tool .crimson { stroke: #c8284e; }
.tool .grey { stroke: #a4a4a4; }
.tool .mid { stroke: #777; }
.tool .pink { stroke: #d784cb; }
.tool .pinkfill { stroke: #b75fae; fill: #eba3e3; }

/* workbench selector */
.combo {
  position: relative;
  margin-left: 2px;
}

.combo select {
  appearance: none;
  display: block;
  width: 165px;
  height: 23px;
  padding-left: 24px;
  border-radius: 3px;
  background: linear-gradient(to left, #cfcfcf 21px, #dedede 21px);
  color: #777;
}

.comboicon {
  position: absolute;
  left: 2px;
  top: 3px;
  width: 16px;
  height: 16px;
}

.comboarrow {
  position: absolute;
  right: 5px;
  top: 8px;
  width: 10px;
  height: 6px;
  color: #666;
  pointer-events: none;
}

/* main area */
main {
  flex: 1;
  min-height: 0;
  margin-top: 1px;
  display: flex;
}

.dock {
  width: 318px;
  flex: none;
  display: flex;
  flex-direction: column;
}

.docktitle {
  height: 22px;
  margin: 5px 4px 4px;
  padding-right: 6px;
  display: flex;
  align-items: center;
  gap: 6px;
  background: #ebebeb;
  color: #808080;
}

.docktitle h2 {
  flex: 1;
  padding-left: 17px;
  text-align: center;
}

.docktitle svg {
  width: 12px;
  height: 12px;
}

.tabs {
  height: 29px;
  flex: none;
  display: flex;
}

.tabs::before {
  content: "";
  width: 10px;
  border-bottom: 1px solid #ccc;
}

.tabs::after {
  content: "";
  flex: 1;
  border-bottom: 1px solid #ccc;
}

.tab {
  padding: 2px 21px 0;
  border-bottom: 1px solid #ccc;
}

.tab.on {
  padding: 0 23px 3px;
  border: 1px solid #ccc;
  border-top: 4px solid #4d7fdb;
  border-bottom: 0;
}

.tabs.bottom {
  height: 28px;
}

.tabs.bottom::before {
  width: 5px;
}

.tabs.bottom::before,
.tabs.bottom::after,
.tabs.bottom .tab {
  border-bottom: 0;
  border-top: 1px solid #ccc;
}

.tabs.bottom::after {
  margin-right: 8px;
}

.tabs.bottom .tab {
  padding: 0 20px 0 21px;
}

.tabs.bottom .tab.on {
  padding: 4px 29px 0;
  border-top: 0;
  border-bottom: 4px solid #4a7de4;
}

.panel {
  min-height: 0;
  margin: 0 6px;
  overflow: hidden;
  border: 1px solid #bfbfbf;
  border-radius: 3px;
  background: #efefef;
}

.treepanel {
  flex: 358 0 0;
  margin-top: 6px;
}

.proppanel {
  flex: 393 0 0;
  margin-bottom: 6px;
}

.treehead {
  height: 27px;
  display: flex;
  background: #c2c2c2;
  line-height: 28px;
}

.treehead span {
  width: 187px;
  padding-left: 6px;
  border-right: 1px solid #aaa;
}

.treehead span:last-child {
  flex: 1;
  border: 0;
}

.rootlabel {
  height: 15px;
  padding-left: 3px;
  line-height: 17px;
}

.tree ul {
  margin-left: 20px;
}

/* guide lines between siblings */
.tree ul > li {
  background: linear-gradient(#ccc, #ccc) 9px 0 / 1px 100% no-repeat;
}

.tree ul > li:last-child {
  background-size: 1px 9px;
}

.row {
  height: 18px;
  display: flex;
  align-items: center;
  padding-top: 1px;
  white-space: nowrap;
}

.row.selected {
  margin-right: 17px;
  background: #5e91fc;
  color: #fff;
  font-weight: bold;
}

.row.bold {
  font-weight: bold;
}

.exp {
  width: 20px;
  height: 18px;
  padding-left: 4px;
  background: linear-gradient(#ccc, #ccc) 14px 9px / 6px 1px no-repeat;
  color: #999;
}

.exp.leaf {
  background: linear-gradient(#ccc, #ccc) 10px 9px / 10px 1px no-repeat;
}

.selected .exp {
  background: none;
  color: #3f6ab8;
}

.exp svg {
  width: 10px;
  height: 10px;
}

.ico {
  width: 16px;
  height: 16px;
  flex: none;
}

.row .ico {
  margin: 0 6px 0 3px;
}

.hsplit {
  height: 22px;
  flex: none;
  display: flex;
  align-items: center;
  justify-content: center;
  gap: 2px;
}

.hsplit i {
  width: 6px;
  height: 2px;
  background: #777;
}

.vsplit {
  width: 10px;
  flex: none;
  display: flex;
  flex-direction: column;
  align-items: center;
  justify-content: center;
  gap: 2px;
}

.vsplit i {
  width: 2px;
  height: 6px;
  background: #777;
}

/* property table */
.props {
  width: 100%;
  table-layout: fixed;
  border-collapse: separate;
  border-spacing: 0;
}

.props th {
  height: 27px;
  padding: 0 6px;
  background: #c2c2c2;
  font-weight: normal;
  text-align: left;
}

.props th:first-child {
  width: 100px;
  border-right: 1px solid #aaa;
}

.props td {
  height: 20px;
  padding: 2px 0 0 3px;
  border-bottom: 1px solid #ccc;
  line-height: 17px;
  white-space: nowrap;
}

.props tr:nth-child(even) td {
  background-color: #e4e4e4;
}

.props td:first-child {
  padding: 0 0 0 9px;
  border-bottom: 0;
  border-right: 1px solid #ccc;
  background-image: linear-gradient(#ccc, #ccc);
  background-size: 1px 100%;
  background-position: 9px 0;
  background-repeat: no-repeat;
}

.props tr:last-child td:first-child {
  background-size: 1px 10px;
}

.props td span {
  display: block;
  padding: 2px 0 0 14px;
  border-bottom: 1px solid #ccc;
  border-image: linear-gradient(to right, transparent 11px, #ccc 11px) 1;
  background: linear-gradient(#ccc, #ccc) 0 10px / 10px 1px no-repeat;
}

.props .group td:first-child {
  padding: 2px 0 0 23px;
  border: 0;
  background: #d0d0d0;
  color: #888;
  font-weight: bold;
}

/* 3D view */
.work {
  flex: 1;
  min-width: 0;
  display: flex;
  flex-direction: column;
}

.viewport {
  position: relative;
  flex: 1;
  min-height: 0;
  background: linear-gradient(#aaaaaa, #d6d7e1);
}

.scene {
  width: 100%;
  height: 100%;
}

.watermark {
  fill: #f4f4f4;
  fill-opacity: .85;
  filter: drop-shadow(1px 2px 0 rgba(60, 60, 60, .6));
}

.wm-cjk {
  font-family: "Noto Sans CJK SC", sans-serif;
  font-size: 62px;
  font-weight: 300;
}

.wm-latin {
  font-family: "Liberation Serif", serif;
  font-size: 58px;
}

.navcube {
  position: absolute;
  top: 0;
  right: 0;
  width: 158px;
  height: 150px;
  fill: none;
}

.axiscross {
  position: absolute;
  right: 0;
  bottom: 20px;
  width: 46px;
  height: 60px;
}

.face {
  fill: #111;
  font-size: 7px;
  font-weight: bold;
}

.axis {
  font-size: 10px;
}

.doctabs {
  height: 33px;
  flex: none;
  display: flex;
}

.doctab {
  display: flex;
  align-items: center;
  padding: 4px 8px 0 4px;
  border-right: 1px solid #ccc;
  border-bottom: 4px solid #4a7de4;
}

.doctab a {
  margin: 0 14px 0 10px;
}

.doctab button svg {
  width: 11px;
  height: 11px;
}

/* status bar */
.statusbar {
  height: 36px;
  flex: none;
  display: flex;
  align-items: center;
  gap: 10px;
  padding: 7px 21px 0 2px;
}

.message {
  flex: 1;
}

.gesture {
  width: 114px;
  height: 26px;
  display: flex;
  align-items: center;
  justify-content: center;
  gap: 4px;
  border: 1px solid #c4c4c4;
  border-radius: 3px;
  background: linear-gradient(#fafafa, #ebebeb);
  color: #777;
}

.gesture svg {
  width: 16px;
  height: 16px;
}
```
